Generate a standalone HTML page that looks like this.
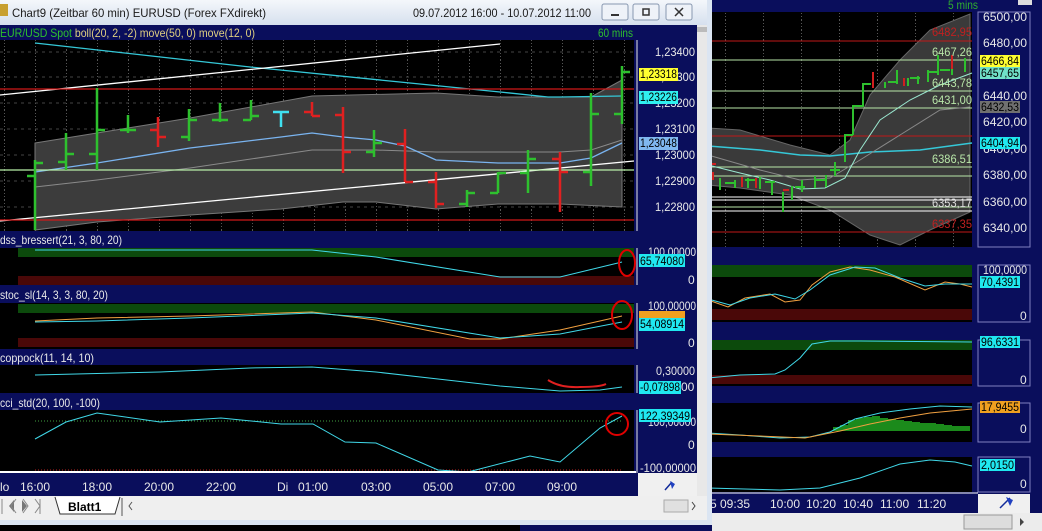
<!DOCTYPE html>
<html><head><meta charset="utf-8"><style>
html,body{margin:0;padding:0;width:1042px;height:531px;overflow:hidden;background:#0a0e5c}
svg{display:block}
text{font-family:"Liberation Sans Narrow","Liberation Sans",sans-serif;font-size:12px}
</style></head><body>
<svg width="1042" height="531" viewBox="0 0 1042 531" xmlns="http://www.w3.org/2000/svg">
<defs>
<linearGradient id="tb" x1="0" y1="0" x2="0" y2="1"><stop offset="0" stop-color="#f4f7fb"/><stop offset="1" stop-color="#d6e0ee"/></linearGradient>
<pattern id="vg" width="31" height="10" patternUnits="userSpaceOnUse" x="4"><line x1="0.5" y1="0" x2="0.5" y2="10" stroke="#555" stroke-dasharray="1,2"/></pattern>
<pattern id="vg2" width="38" height="10" patternUnits="userSpaceOnUse" x="3"><line x1="0.5" y1="0" x2="0.5" y2="10" stroke="#555" stroke-dasharray="1,2"/></pattern>
</defs>

<!-- ===== RIGHT BACKGROUND APP ===== -->
<rect x="707" y="0" width="335" height="531" fill="#0a0e5c"/>
<text x="948" y="9" fill="#2fae2f" font-size="11" textLength="30" lengthAdjust="spacingAndGlyphs">5 mins</text>
<rect x="1018" y="0" width="14" height="5" fill="#ddd"/>
<rect x="708" y="12" width="264" height="235" fill="#000"/>
<rect x="708" y="12" width="264" height="235" fill="url(#vg2)"/>
<path d="M708,128 L740,130 L790,145 L830,155 L850,140 L870,95 L900,60 L930,30 L970,14 L970,212 L930,230 L900,245 L870,235 L830,210 L790,195 L740,188 L708,185 Z" fill="#3a3a3a" stroke="#666"/>
<line x1="708" y1="41" x2="972" y2="41" stroke="#c01818"/>
<line x1="708" y1="136" x2="972" y2="136" stroke="#c01818"/>
<line x1="708" y1="232" x2="972" y2="232" stroke="#c01818"/>
<line x1="708" y1="60" x2="972" y2="60" stroke="#b8e6a8"/>
<line x1="708" y1="91" x2="972" y2="91" stroke="#b8e6a8"/>
<line x1="708" y1="108" x2="972" y2="108" stroke="#b8e6a8"/>
<line x1="708" y1="167" x2="972" y2="167" stroke="#b8e6a8"/>
<line x1="708" y1="176" x2="972" y2="176" stroke="#b8e6a8"/>
<line x1="708" y1="197" x2="972" y2="197" stroke="#fff"/>
<line x1="708" y1="200" x2="972" y2="200" stroke="#fff"/>
<line x1="708" y1="207" x2="972" y2="207" stroke="#b8e6a8"/>
<line x1="708" y1="211" x2="972" y2="211" stroke="#fff"/>
<polyline points="708,146 760,150 800,155 830,156 870,152 920,150 972,143" fill="none" stroke="#35c8d8" stroke-width="1.5"/>
<polyline points="708,155 760,170 800,180 830,178 860,160 900,135 940,110 970,107" fill="none" stroke="#888"/>
<polyline points="708,165 740,173 770,180 800,189 825,188 845,178 860,150 880,120 910,100 940,85 972,73" fill="none" stroke="#9ae8d0"/>
<path d="M710,160v15 M720,178v12 M735,180v8 M748,178v10 M760,177v12 M772,183v12 M783,192v20 M792,186v14 M802,180v12 M815,176v12 M826,175v12 M835,162v14 M845,134v28 M853,105v30 M863,83v24 M873,72v12 M885,82v6 M897,70v14 M908,78v8 M918,76v8 M928,70v12 M938,55v20 M952,65v10 M965,58v14" stroke="#2ec02e" stroke-width="2"/>
<path d="M725,183h10 M745,180h10 M765,182h10 M795,187h10 M815,180h10 M830,170h10 M845,135h8 M853,106h10 M863,84h8 M888,82h10 M910,78h10 M928,72h10 M940,70h10" stroke="#2ec02e" stroke-width="2"/>
<path d="M710,164h6 M713,172v8 M742,177v10 M756,178v10 M783,190h6 M873,72v16 M904,78v8 M952,55v14" stroke="#d02020" stroke-width="2"/>
<g font-size="11">
<text x="932" y="36" fill="#c02020" textLength="40" lengthAdjust="spacingAndGlyphs">6482,95</text>
<text x="932" y="56" fill="#b8e6a8" textLength="40" lengthAdjust="spacingAndGlyphs">6467,26</text>
<text x="932" y="87" fill="#b8e6a8" textLength="40" lengthAdjust="spacingAndGlyphs">6443,78</text>
<text x="932" y="104" fill="#b8e6a8" textLength="40" lengthAdjust="spacingAndGlyphs">6431,00</text>
<text x="932" y="163" fill="#b8e6a8" textLength="40" lengthAdjust="spacingAndGlyphs">6386,51</text>
<text x="932" y="207" fill="#ddd" textLength="40" lengthAdjust="spacingAndGlyphs">6353,17</text>
<text x="932" y="228" fill="#c02020" textLength="40" lengthAdjust="spacingAndGlyphs">6337,35</text>
</g>
<rect x="978" y="12" width="52" height="235" fill="#0a0e5c" stroke="#8080c0"/>
<g fill="#e8e8e8">
<text x="983" y="21" textLength="44" lengthAdjust="spacingAndGlyphs">6500,00</text><text x="983" y="47" textLength="44" lengthAdjust="spacingAndGlyphs">6480,00</text><text x="983" y="100" textLength="44" lengthAdjust="spacingAndGlyphs">6440,00</text><text x="983" y="126" textLength="44" lengthAdjust="spacingAndGlyphs">6420,00</text><text x="983" y="153" textLength="44" lengthAdjust="spacingAndGlyphs">6400,00</text><text x="983" y="179" textLength="44" lengthAdjust="spacingAndGlyphs">6380,00</text><text x="983" y="206" textLength="44" lengthAdjust="spacingAndGlyphs">6360,00</text><text x="983" y="232" textLength="44" lengthAdjust="spacingAndGlyphs">6340,00</text>
</g>
<rect x="980" y="55" width="40" height="12" fill="#ffff30"/><text x="981" y="65" fill="#000" textLength="38" lengthAdjust="spacingAndGlyphs">6466,84</text>
<rect x="980" y="67" width="40" height="12" fill="#70e0c8"/><text x="981" y="77" fill="#000" textLength="38" lengthAdjust="spacingAndGlyphs">6457,65</text>
<rect x="980" y="101" width="40" height="12" fill="#707070"/><text x="981" y="111" fill="#000" textLength="38" lengthAdjust="spacingAndGlyphs">6432,53</text>
<rect x="980" y="137" width="40" height="12" fill="#20e8f0"/><text x="981" y="147" fill="#000" textLength="38" lengthAdjust="spacingAndGlyphs">6404,94</text>

<rect x="708" y="265" width="264" height="57" fill="#000"/>
<rect x="708" y="265" width="264" height="12" fill="#0c4a0c"/><rect x="708" y="309" width="264" height="11" fill="#4a0808"/>
<polyline points="708,300 728,307 745,298 770,294 785,302 800,300 812,285 830,272 850,267 870,270 895,277 925,290 945,282 960,284 972,287" fill="none" stroke="#f0a040"/>
<polyline points="708,299 730,305 750,298 775,294 795,299 810,290 830,275 855,267 875,268 900,278 925,286 945,284 972,284" fill="none" stroke="#40d8e8"/>
<rect x="978" y="265" width="52" height="57" fill="#0a0e5c" stroke="#8080c0"/>
<text x="983" y="274" fill="#e8e8e8" textLength="44" lengthAdjust="spacingAndGlyphs">100,0000</text><rect x="980" y="276" width="40" height="12" fill="#20e8f0"/><text x="981" y="286" fill="#000" textLength="38" lengthAdjust="spacingAndGlyphs">70,4391</text><text x="1020" y="320" fill="#e8e8e8">0</text>

<rect x="708" y="340" width="264" height="46" fill="#000"/>
<rect x="708" y="340" width="264" height="10" fill="#0c4a0c"/><rect x="708" y="375" width="264" height="9" fill="#4a0808"/>
<polyline points="708,378 740,375 775,374 785,370 800,358 812,344 830,341 860,341 972,342" fill="none" stroke="#40d8e8"/>
<rect x="978" y="340" width="52" height="46" fill="#0a0e5c" stroke="#8080c0"/>
<rect x="980" y="336" width="40" height="12" fill="#20e8f0"/><text x="981" y="346" fill="#000" textLength="38" lengthAdjust="spacingAndGlyphs">96,6331</text><text x="1020" y="384" fill="#e8e8e8">0</text>

<rect x="708" y="403" width="264" height="39" fill="#000"/>
<path d="M833,427h8v4h-8z M840,425h8v6h-8z M848,420h8v11h-8z M856,418h8v13h-8z M864,417h8v14h-8z M872,416h8v15h-8z M880,418h8v13h-8z M888,419h8v12h-8z M896,420h8v11h-8z M904,421h8v10h-8z M912,422h8v9h-8z M920,423h8v8h-8z M928,423h8v8h-8z M936,424h8v7h-8z M944,425h8v6h-8z M952,426h8v5h-8z M960,426h10v5h-10z" fill="#1b8a1b"/>
<polyline points="708,433 740,435 780,438 810,437 830,432 855,419 880,413 910,409 940,406 972,407" fill="none" stroke="#40d8e8"/>
<polyline points="708,434 760,436 805,438 840,431 870,424 900,418 930,413 972,409" fill="none" stroke="#f0a040"/>
<rect x="978" y="403" width="52" height="39" fill="#0a0e5c" stroke="#8080c0"/>
<rect x="980" y="401" width="40" height="12" fill="#f0a020"/><text x="981" y="411" fill="#000" textLength="38" lengthAdjust="spacingAndGlyphs">17,9455</text><text x="1020" y="433" fill="#e8e8e8">0</text>

<rect x="708" y="457" width="264" height="35" fill="#000"/>
<polyline points="708,488 780,490 820,488 860,478 900,464 930,460 955,462 972,466" fill="none" stroke="#40d8e8"/>
<rect x="978" y="457" width="52" height="35" fill="#0a0e5c" stroke="#8080c0"/>
<rect x="980" y="459" width="35" height="12" fill="#20e8f0"/><text x="981" y="469" fill="#000" textLength="33" lengthAdjust="spacingAndGlyphs">2,0150</text><text x="1020" y="488" fill="#e8e8e8">0</text>
<line x1="708" y1="493" x2="978" y2="493" stroke="#fff"/>
<g fill="#e8e8e8" font-size="13"><text x="710" y="508">5 09:35</text><text x="770" y="508">10:00</text><text x="806" y="508">10:20</text><text x="843" y="508">10:40</text><text x="880" y="508">11:00</text><text x="917" y="508">11:20</text></g>
<rect x="978" y="494" width="52" height="19" fill="#f0f0f0"/>
<path d="M1000,508 L1010,498" stroke="#102a9a" stroke-width="1.5"/><path d="M1006,497 l7,3 -3,6 z" fill="#2040c0"/>
<rect x="707" y="513" width="335" height="18" fill="#ececec"/>
<rect x="964" y="515" width="48" height="14" fill="#ddd" stroke="#999"/>
<path d="M1020,518 l4,4 -4,4z" fill="#444"/>

<!-- ===== LEFT WINDOW ===== -->
<rect x="0" y="0" width="712" height="531" fill="#dbe5f2"/>
<rect x="0" y="0" width="707" height="25" fill="url(#tb)"/>
<rect x="0" y="4" width="8" height="12" fill="#c8a030"/>
<text x="12" y="17" fill="#1a1a1a" font-size="13" textLength="254" lengthAdjust="spacingAndGlyphs">Chart9 (Zeitbar 60 min)  EURUSD (Forex FXdirekt)</text>
<text x="413" y="17" fill="#1a1a1a" font-size="13" textLength="178" lengthAdjust="spacingAndGlyphs">09.07.2012 16:00 - 10.07.2012 11:00</text>
<g fill="#eef2f8" stroke="#8898b0"><rect x="602" y="4" width="26" height="16" rx="2"/><rect x="633" y="4" width="26" height="16" rx="2"/><rect x="666" y="4" width="26" height="16" rx="2"/></g>
<path d="M611,15h8" stroke="#333" stroke-width="2"/><rect x="643" y="9" width="6" height="6" fill="none" stroke="#333" stroke-width="1.5"/><path d="M675,8l8,8M683,8l-8,8" stroke="#333" stroke-width="1.5"/>

<rect x="0" y="25" width="697" height="448" fill="#0a0e5c"/>
<rect x="697" y="25" width="10" height="495" fill="#e8e8e8"/><rect x="697" y="27" width="10" height="5" fill="#bbb"/>
<text x="0" y="37" fill="#2ec02e" textLength="255" lengthAdjust="spacingAndGlyphs">EUR/USD Spot <tspan fill="#e0d080">boll(20, 2, -2) move(50, 0) move(12, 0)</tspan></text>
<text x="598" y="37" fill="#2ec02e" font-size="11" textLength="35" lengthAdjust="spacingAndGlyphs">60 mins</text>

<rect x="0" y="40" width="634" height="191" fill="#000"/>
<rect x="0" y="40" width="634" height="191" fill="url(#vg)"/>
<g stroke="#444" stroke-dasharray="3,4"><line x1="0" y1="52" x2="634" y2="52"/><line x1="0" y1="77" x2="634" y2="77"/><line x1="0" y1="103" x2="634" y2="103"/><line x1="0" y1="129" x2="634" y2="129"/><line x1="0" y1="155" x2="634" y2="155"/><line x1="0" y1="181" x2="634" y2="181"/><line x1="0" y1="207" x2="634" y2="207"/></g>
<path d="M35,143 L97,133 L190,118 L312,96 L436,93 L498,97 L560,97 L591,97 L622,80 L622,207 L560,204 L498,204 L436,209 L376,202 L343,202 L281,209 L190,215 L97,222 L35,230 Z" fill="#3c3c3c" stroke="#777"/>
<polyline points="35,187 97,180 190,168 312,150 376,150 436,152 498,152 560,152 591,150 622,140" fill="none" stroke="#8a8a8a"/>
<polyline points="35,172 97,163 190,148 281,137 312,133 343,137 376,140 405,146 436,160 498,163 560,163 591,158 622,143" fill="none" stroke="#7ab4f0" stroke-width="1.3"/>
<polyline points="35,43 250,67 470,89 500,92 548,97 560,97 622,96" fill="none" stroke="#35c8d8" stroke-width="1.3"/>
<line x1="0" y1="95" x2="500" y2="44" stroke="#fff" stroke-width="1.3"/>
<line x1="0" y1="221" x2="634" y2="161" stroke="#fff" stroke-width="1.3"/>
<line x1="0" y1="89" x2="634" y2="89" stroke="#d01818" stroke-width="1.3"/>
<line x1="0" y1="220" x2="634" y2="220" stroke="#d01818" stroke-width="1.3"/>
<line x1="0" y1="170" x2="634" y2="170" stroke="#b8f0a8" stroke-width="1.3"/>
<g stroke-width="2.5" fill="none">
<path stroke="#2ec02e" d="M35,160V230M27,176h8M35,163h8 M66,133V170M58,162h8M66,154h8 M97,88V170M89,154h8M97,130h8 M128,115V133M120,130h8M128,130h8 M189,109V141M181,137h8M189,120h8 M220,103V122M212,120h8M220,120h8 M251,100V120M243,120h8M251,116h8 M374,130V157M366,152h8M374,143h8 M467,190V207M459,204h8M467,193h8 M498,172V193M490,193h8M498,173h8 M528,150V193M520,173h8M528,159h8 M591,93V186M583,172h8M591,114h8 M622,66V124M614,114h8M622,72h8"/>
<path stroke="#e02020" d="M158,117V147M150,130h8M158,137h8 M312,102V116M304,112h8M312,116h8 M343,107V173M335,115h8M343,152h8 M405,129V182M397,144h8M405,182h8 M436,172V208M428,182h8M436,204h8 M560,152V212M552,159h8M560,172h8"/>
<path stroke="#40e0f0" d="M281,112V127M273,112h16"/>
</g>
<rect x="638" y="40" width="59" height="191" fill="#0a0e5c"/>
<line x1="637" y1="40" x2="637" y2="231" stroke="#e8e8e8"/>
<g fill="#e8e8e8"><text x="655" y="56" textLength="40" lengthAdjust="spacingAndGlyphs">1,23400</text><text x="655" y="81" textLength="40" lengthAdjust="spacingAndGlyphs">1,23300</text><text x="655" y="107" textLength="40" lengthAdjust="spacingAndGlyphs">1,23200</text><text x="655" y="133" textLength="40" lengthAdjust="spacingAndGlyphs">1,23100</text><text x="655" y="159" textLength="40" lengthAdjust="spacingAndGlyphs">1,23000</text><text x="655" y="185" textLength="40" lengthAdjust="spacingAndGlyphs">1,22900</text><text x="655" y="211" textLength="40" lengthAdjust="spacingAndGlyphs">1,22800</text></g>
<rect x="639" y="68" width="39" height="13" fill="#ffff30"/><text x="640" y="78" fill="#000" textLength="37" lengthAdjust="spacingAndGlyphs">1,23318</text>
<rect x="639" y="91" width="39" height="13" fill="#30f0f0"/><text x="640" y="101" fill="#000" textLength="37" lengthAdjust="spacingAndGlyphs">1,23226</text>
<rect x="639" y="137" width="39" height="13" fill="#80b8f0"/><text x="640" y="147" fill="#000" textLength="37" lengthAdjust="spacingAndGlyphs">1,23048</text>

<text x="0" y="244" fill="#e8e8e8" textLength="122" lengthAdjust="spacingAndGlyphs">dss_bressert(21, 3, 80, 20)</text>
<rect x="0" y="248" width="634" height="37" fill="#000"/>
<rect x="18" y="248" width="616" height="9" fill="#0c4a0c"/><rect x="18" y="276" width="616" height="9" fill="#4a0808"/>
<polyline points="35,250 312,250 376,257 500,277 560,277 622,262" fill="none" stroke="#40d8e8"/>
<rect x="638" y="248" width="59" height="37" fill="#0a0e5c"/><line x1="637" y1="248" x2="637" y2="285" stroke="#e8e8e8"/>
<text x="648" y="256" fill="#e8e8e8" textLength="48" lengthAdjust="spacingAndGlyphs">100,00000</text>
<rect x="639" y="254" width="46" height="13" fill="#20e8f0"/><text x="640" y="265" fill="#000" textLength="44" lengthAdjust="spacingAndGlyphs">65,74080</text>
<text x="688" y="284" fill="#e8e8e8">0</text>
<text x="0" y="299" fill="#e8e8e8" textLength="108" lengthAdjust="spacingAndGlyphs">stoc_sl(14, 3, 3, 80, 20)</text>
<rect x="0" y="303" width="634" height="46" fill="#000"/>
<rect x="18" y="304" width="616" height="9" fill="#0c4a0c"/><rect x="18" y="338" width="616" height="9" fill="#4a0808"/>
<polyline points="35,321 97,318 190,316 312,312 376,320 470,339 500,339 560,330 622,316" fill="none" stroke="#f0a040"/>
<polyline points="35,322 97,321 190,318 312,313 376,318 500,338 560,334 622,322" fill="none" stroke="#40d8e8"/>
<rect x="638" y="303" width="59" height="46" fill="#0a0e5c"/><line x1="637" y1="303" x2="637" y2="349" stroke="#e8e8e8"/>
<text x="648" y="310" fill="#e8e8e8" textLength="48" lengthAdjust="spacingAndGlyphs">100,00000</text>
<rect x="639" y="311" width="46" height="7" fill="#f0a020"/>
<rect x="639" y="318" width="46" height="13" fill="#20e8f0"/><text x="640" y="328" fill="#000" textLength="44" lengthAdjust="spacingAndGlyphs">54,08914</text>
<text x="688" y="347" fill="#e8e8e8">0</text>
<text x="0" y="362" fill="#e8e8e8" textLength="94" lengthAdjust="spacingAndGlyphs">coppock(11, 14, 10)</text>
<rect x="0" y="365" width="634" height="28" fill="#000"/>
<polyline points="35,375 160,372 250,368 312,367 376,372 438,379 500,386 560,391 600,390 622,387" fill="none" stroke="#40d8e8"/>
<path d="M548,380 Q560,388 580,387 Q600,387 606,384" fill="none" stroke="#e02020" stroke-width="2"/>
<rect x="638" y="365" width="59" height="28" fill="#0a0e5c"/><line x1="637" y1="365" x2="637" y2="393" stroke="#e8e8e8"/>
<text x="656" y="375" fill="#e8e8e8" textLength="39" lengthAdjust="spacingAndGlyphs">0,30000</text>
<rect x="639" y="381" width="42" height="13" fill="#20e8f0"/><text x="640" y="391" fill="#000" textLength="40" lengthAdjust="spacingAndGlyphs">-0,07898</text>
<text x="681" y="391" fill="#e8e8e8">00</text>
<text x="0" y="407" fill="#e8e8e8" textLength="100" lengthAdjust="spacingAndGlyphs">cci_std(20, 100, -100)</text>
<rect x="0" y="410" width="634" height="63" fill="#000"/>
<line x1="35" y1="421" x2="622" y2="421" stroke="#40a040" stroke-dasharray="1,2"/>
<line x1="35" y1="470" x2="622" y2="470" stroke="#c02020" stroke-dasharray="1,2"/>
<polyline points="35,439 66,422 97,413 160,422 221,418 281,424 313,424 345,442 376,443 438,470 468,472 530,456 560,462 600,428 622,416" fill="none" stroke="#40d8e8"/>
<rect x="638" y="410" width="59" height="63" fill="#0a0e5c"/><line x1="637" y1="410" x2="637" y2="473" stroke="#e8e8e8"/>
<text x="648" y="426" fill="#e8e8e8" textLength="48" lengthAdjust="spacingAndGlyphs">100,00000</text>
<rect x="639" y="409" width="52" height="13" fill="#20e8f0"/><text x="640" y="420" fill="#000" textLength="50" lengthAdjust="spacingAndGlyphs">122,39349</text>
<text x="688" y="449" fill="#e8e8e8">0</text>
<text x="640" y="472" fill="#e8e8e8" textLength="56" lengthAdjust="spacingAndGlyphs">-100,00000</text>
<g fill="none" stroke="#e00000" stroke-width="2">
<ellipse cx="627" cy="263" rx="8" ry="13"/><ellipse cx="622" cy="315" rx="10" ry="14"/><ellipse cx="617" cy="424" rx="11" ry="11"/>
</g>
<line x1="0" y1="472" x2="636" y2="472" stroke="#fff" stroke-width="2"/>
<rect x="0" y="473" width="638" height="23" fill="#0a0e5c"/>
<g fill="#e8e8e8" font-size="13"><text x="0" y="491">lo</text><text x="20" y="491">16:00</text><text x="82" y="491">18:00</text><text x="144" y="491">20:00</text><text x="206" y="491">22:00</text><text x="277" y="491">Di</text><text x="298" y="491">01:00</text><text x="361" y="491">03:00</text><text x="423" y="491">05:00</text><text x="485" y="491">07:00</text><text x="547" y="491">09:00</text></g>
<rect x="638" y="473" width="59" height="23" fill="#f0f0f0"/>
<path d="M665,490 L672,482" stroke="#102a9a" stroke-width="1.5"/><path d="M670,481 l5,3 -3,5z" fill="#2040c0"/>
<rect x="0" y="496" width="707" height="24" fill="#efefef"/>
<g fill="#777"><path d="M14,500v12l-5,-6z"/><path d="M22,500l5,6 -5,6z"/></g>
<path d="M2,499v15 M16,499l-5,7 5,7 M23,499l5,7 -5,7 M35,499l5,7 -5,7 M40,499v15" stroke="#888" fill="none"/>
<path d="M55,497 L60,514 L115,514 L120,497" fill="#fff" stroke="#333"/>
<text x="68" y="511" fill="#000" font-size="13" font-weight="bold">Blatt1</text>
<line x1="122" y1="498" x2="122" y2="516" stroke="#555"/>
<path d="M132,502l-3,4 3,4" fill="none" stroke="#555"/>
<rect x="664" y="500" width="24" height="12" fill="#e0e0e0" stroke="#aaa"/>
<path d="M692,502l3,4 -3,4" fill="none" stroke="#444"/>
<rect x="0" y="520" width="712" height="5" fill="#dbe5f2"/>
<rect x="0" y="525" width="712" height="6" fill="#0a0e5c"/>
<rect x="0" y="525" width="520" height="6" fill="#000"/>
</svg>
</body></html>
